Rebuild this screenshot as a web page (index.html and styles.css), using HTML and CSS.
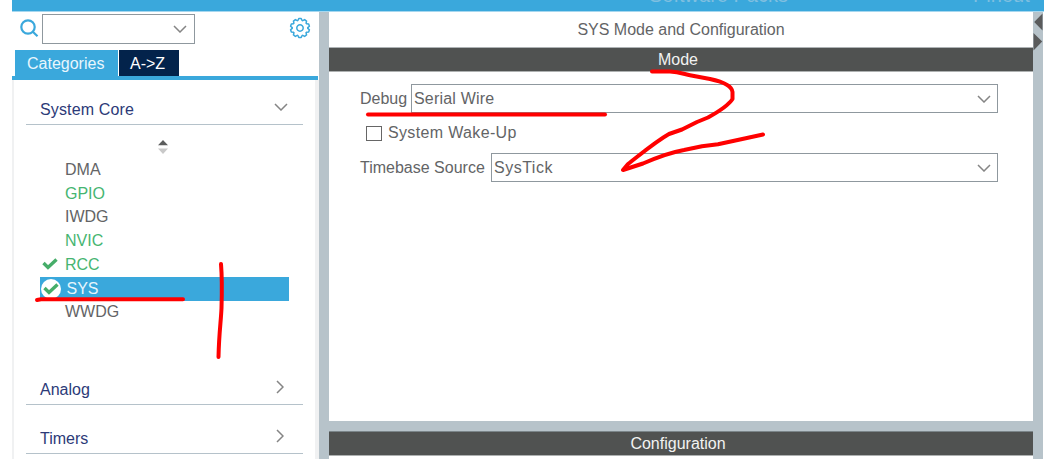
FILE: index.html
```html
<!DOCTYPE html>
<html lang="en">
<head>
<meta charset="utf-8">
<title>SYS Mode and Configuration</title>
<link rel="stylesheet" href="styles.css">
</head>
<body>
<div class="app">
  <header class="topbar">
    <span class="top-packs">Software Packs</span>
    <span class="top-pinout">Pinout</span>
  </header>
  <div class="workspace">
    <aside class="sidebar">
      <div class="search-row">
        <svg class="search-icon" width="20" height="20" viewBox="0 0 20 20"><circle cx="8" cy="8" r="6.7"/><path d="M12.800 12.700 17.500 17.300"/></svg>
        <div class="search-box"><svg class="chevron" width="14" height="8" viewBox="0 0 14 8"><path d="M1 1 7 7 13 1"/></svg></div>
        <svg class="gear" width="22" height="22" viewBox="-11 -11 22 22">
          <defs><path id="tooth" d="M-2.100 -7.500 -1.200 -9.500H1.200L2.100 -7.500"/></defs>
          <circle r="3.200"/>
          <use href="#tooth"/><use href="#tooth" transform="rotate(36)"/><use href="#tooth" transform="rotate(72)"/><use href="#tooth" transform="rotate(108)"/><use href="#tooth" transform="rotate(144)"/><use href="#tooth" transform="rotate(180)"/><use href="#tooth" transform="rotate(216)"/><use href="#tooth" transform="rotate(252)"/><use href="#tooth" transform="rotate(288)"/><use href="#tooth" transform="rotate(324)"/>
        </svg>
      </div>
      <nav class="tabs"><span class="tab tab-active">Categories</span><span class="tab tab-dark">A-&gt;Z</span></nav>
      <div class="panel">
        <section class="group group-core">
          <span>System Core</span>
          <svg class="chevron" width="14" height="8" viewBox="0 0 14 8"><path d="M1 1 7 7 13 1"/></svg>
        </section>
        <div class="sorter"><svg width="10" height="14" viewBox="0 0 10 14"><path fill="#5c5d5d" d="M0 5.300 5 0 10 5.300z"/><path fill="#c9c9c9" d="M0 8.500h10L5 14z"/></svg></div>
        <ul class="items">
          <li>DMA</li>
          <li class="green">GPIO</li>
          <li>IWDG</li>
          <li class="green">NVIC</li>
          <li class="green"><svg class="check" width="16" height="12" viewBox="0 0 16 12"><path d="M1.500 5 6 9.500 14.500 1.500"/></svg>RCC</li>
          <li class="selected"><span class="check-disc"><svg class="check" width="16" height="12" viewBox="0 0 16 12"><path d="M1.500 5 6 9.500 14.500 1.500"/></svg></span>SYS</li>
          <li>WWDG</li>
        </ul>
        <section class="group group-analog">
          <span>Analog</span>
          <svg class="chevron" width="8" height="14" viewBox="0 0 8 14"><path d="M1 1 7 7 1 13"/></svg>
        </section>
        <section class="group group-timers">
          <span>Timers</span>
          <svg class="chevron" width="8" height="14" viewBox="0 0 8 14"><path d="M1 1 7 7 1 13"/></svg>
        </section>
      </div>
    </aside>
    <div class="divider"></div>
    <main class="main">
      <h1 class="title">SYS Mode and Configuration</h1>
      <h2 class="bar">Mode</h2>
      <div class="form">
        <div class="field debug"><label>Debug</label><div class="select">Serial Wire<svg class="chevron" width="14" height="8" viewBox="0 0 14 8"><path d="M1 1 7 7 13 1"/></svg></div></div>
        <div class="field wake"><span class="checkbox"></span><label>System Wake-Up</label></div>
        <div class="field timebase"><label>Timebase Source</label><div class="select">SysTick<svg class="chevron" width="14" height="8" viewBox="0 0 14 8"><path d="M1 1 7 7 13 1"/></svg></div></div>
      </div>
      <div class="splitter"></div>
      <h2 class="bar bar-config">Configuration</h2>
    </main>
    <div class="divider divider-right">
      <svg width="10" height="40" viewBox="0 0 10 40"><path fill="#5a5b5c" d="M9.500 1.500v17L1.200 10zM.500 21v17.500L9.200 29.500z"/></svg>
    </div>
  </div>
  <svg class="ink" width="1044" height="459" viewBox="0 0 1044 459">
    <path d="M37 300 41 299.300H183"/>
    <path d="M221 264C222 276 222 292 221.500 308 221 321 219 333 218.500 357"/>
    <path d="M368 114.500H605"/>
    <path d="M652 71.500H670C679 72 684 74 690 75.200L710 79C724 82 732 86 732.500 92V99C728 106 718 112 708 117.500L697 122 682 129.500 669 134C655 142 641 154 628 164L623 170 643 163.500C658 157 670 152.500 684 150L702 146.300 718 144.300 740 139.500 763 134.500"/>
  </svg>
</div>
</body>
</html>
```
FILE: styles.css
```css
* { box-sizing: border-box; }
body {
  margin: 0;
  background: #fff;
  color: #636466;
  font: 16px/24px "Liberation Sans", Arial, sans-serif;
}
.app { position: relative; width: 1044px; height: 459px; overflow: hidden; padding-left: 12px; display: flex; flex-direction: column; }

.topbar { height: 11px; flex: none; display: flex; background: #3aa8dc; overflow: hidden; color: #7fbfe0; font-size: 20px; line-height: 24px; white-space: nowrap; }
.topbar span { margin-top: -17px; }
.top-packs { padding-left: 637px; width: 961px; flex: none; }

.workspace { flex: 1; min-height: 0; display: flex; border-top: 1px solid #a6d7ef; }

.sidebar { width: 307px; flex: none; display: flex; flex-direction: column; }
.search-row { height: 38px; flex: none; display: flex; align-items: flex-start; padding: 2px 8px 0; }
.search-icon { margin-top: 5px; fill: none; stroke: #3aa8dc; stroke-width: 2.2; }
.search-box { width: 153px; height: 30px; margin-left: 2px; border: 1px solid #8f989e; display: flex; align-items: center; justify-content: flex-end; padding-right: 7px; }
.chevron { flex: none; fill: none; stroke: #858585; stroke-width: 1.5; }
.gear { margin: 3px 0 0 94px; fill: none; stroke: #3aa8dc; stroke-width: 1.5; stroke-linejoin: round; stroke-linecap: round; }

.tabs { height: 30px; flex: none; width: 306px; padding-left: 3px; display: flex; gap: 1px; border-bottom: 4px solid #3aa8dc; }
.tab { height: 26px; line-height: 27px; color: #fff; }
.tab-active { width: 103px; padding-left: 12px; background: #3aa8dc; color: #e8f6fd; }
.tab-dark { width: 60px; padding-left: 11px; background: #03234b; }

.panel { flex: 1; min-height: 0; padding: 0 12px; border-left: 2px solid #f0f1f2; border-right: 4px solid #f0f1f2; display: flex; flex-direction: column; }
.group { flex: none; width: 277px; display: flex; justify-content: space-between; align-items: center; padding: 0 15px 0 14px; border-bottom: 1px solid #b5c2ca; color: #2c3a78; }
.group-core { height: 45px; padding-top: 15px; letter-spacing: .15px; }
.group-core .chevron { margin-top: -5px; }
.sorter { flex: none; height: 33px; padding: 15px 0 0 132px; line-height: 0; }
.items { list-style: none; flex: none; margin: 0 0 0 14px; padding: 0; width: 249px; height: 215px; }
.items li { height: 23.750px; display: flex; align-items: center; padding-left: 25px; line-height: 24px; }
.items .green { color: #46b571; }
.check { flex: none; fill: none; stroke: #46ad69; stroke-width: 3.4; }
.items li > .check { margin: -2px 7px 0 -23px; }
.items .selected { background: #3aa8dc; color: #e6f5fc; padding-left: 1px; }
.check-disc { width: 20px; height: 20px; margin-right: 5.500px; border-radius: 50%; background: #fff; display: flex; align-items: center; justify-content: center; }
.group-analog { height: 32px; padding-top: 3px; }
.group-timers { height: 49px; padding-top: 20px; }
.group-analog .chevron, .group-timers .chevron { margin: -6px 4px 0 0; }

.divider { width: 10px; flex: none; background: #b7c3ca; }
.divider-right { margin-right: 1px; line-height: 0; }

.main { width: 704px; flex: none; display: flex; flex-direction: column; }
.title, .bar { margin: 0; font-size: 16px; font-weight: 400; text-align: center; }
.title { height: 35px; flex: none; line-height: 35px; }
.bar { height: 25px; flex: none; line-height: 24px; border-top: 1px solid #aeb3b5; border-bottom: 1px solid #aeb1b1; background: #505251; color: #f2f2f2; padding-right: 6px; }
.form { height: 349px; flex: none; padding: 12px 35px 0 31px; }
.field { display: flex; align-items: center; }
.select { flex: 1; border: 1px solid #8f989e; display: flex; align-items: center; justify-content: space-between; padding: 0 6px 0 2px; height: 29px; letter-spacing: .2px; }
.debug label { width: 51px; }
.timebase label { width: 131px; }
.timebase .select { letter-spacing: .5px; }
.wake { height: 40px; padding-left: 6px; }
.wake label { margin-left: 6px; letter-spacing: .35px; }
.checkbox { width: 16px; height: 15px; border: 1px solid #666; }
.splitter { height: 10px; flex: none; background: #b7c3ca; }
.bar-config { border-top-color: #7b8589; padding-right: 6px; }

/* Freehand marker strokes drawn over the window. */
.ink { position: absolute; left: 0; top: 0; pointer-events: none; fill: none; stroke: #f00; stroke-width: 4; stroke-linecap: round; stroke-linejoin: round; }
```
